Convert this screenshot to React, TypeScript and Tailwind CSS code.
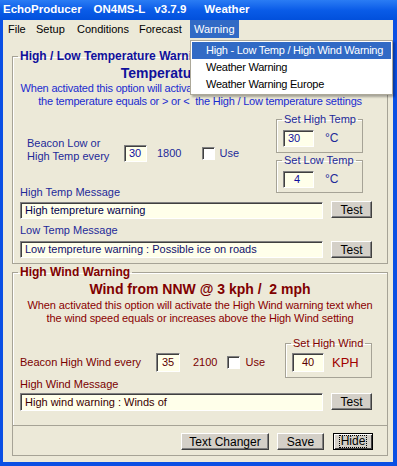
import type { ReactNode } from "react"

function TextBox({ value, className = "" }: { value: string; className?: string }) {
  return (
    <div
      className={`flex items-center bg-[#FFFFEA] border border-t-[#808080] border-l-[#808080] border-b-white border-r-white shadow-[inset_1px_1px_0_#404040] pl-[4px] text-[11px] leading-none whitespace-nowrap overflow-hidden ${className}`}
    >
      {value}
    </div>
  )
}

function Btn({ label, className = "" }: { label: string; className?: string }) {
  return (
    <div
      className={`flex items-center justify-center bg-[#D4D0C8] border border-t-white border-l-white border-b-[#404040] border-r-[#404040] shadow-[inset_-1px_-1px_0_#808080] text-[12px] text-black ${className}`}
    >
      {label}
    </div>
  )
}

function Check() {
  return (
    <div className="w-[13px] h-[13px] bg-white border border-t-[#808080] border-l-[#808080] border-b-white border-r-white shadow-[inset_1px_1px_0_#404040]" />
  )
}

function Group({
  title,
  legendClass,
  className = "",
  children,
}: {
  title: string
  legendClass: string
  className?: string
  children: ReactNode
}) {
  return (
    <fieldset className={`border border-[#A6A396] shadow-[inset_1px_1px_0_#fff] ${className}`}>
      <legend className={`ml-[5px] px-[2px] ${legendClass}`}>{title}</legend>
      {children}
    </fieldset>
  )
}

export default function App() {
  return (
    <div className="w-[397px] h-[466px] bg-[#0A4FE4] flex flex-col font-['Liberation_Sans',Arial,sans-serif] select-none">
      {/* title bar */}
      <div className="h-[20px] flex items-center px-[3px] bg-gradient-to-b from-[#2A7CF4] via-[#0A5CE8] to-[#0250DC] text-white font-bold text-[11.5px] whitespace-pre">
        <span>EchoProducer</span>
        <span className="ml-[12px]">ON4MS-L</span>
        <span className="ml-[9px]">v3.7.9</span>
        <span className="ml-[18px]">Weather</span>
      </div>

      {/* window body */}
      <div className="relative flex-1 ml-[3px] mr-[4px] mb-[4px] bg-[#ECE9D8] flex flex-col text-[11px]">
        {/* menu bar */}
        <div className="h-[18px] flex items-center text-black">
          <div className="w-[28px] pl-[5px]">File</div>
          <div className="w-[41px] pl-[5px]">Setup</div>
          <div className="w-[62px] pl-[5px]">Conditions</div>
          <div className="w-[56px] pl-[5px]">Forecast</div>
          <div className="w-[49px] h-[18px] pl-[4px] flex items-center bg-[#316AC5] text-white">Warning</div>
        </div>

        <div className="flex flex-col pt-[11px] pl-[9px] pr-[5px]">
          {/* High / Low temperature group */}
          <Group
            title="High / Low Temperature Warning"
            legendClass="text-[12px] leading-[14px] font-bold text-[#10109C]"
            className="h-[215px] flex flex-col"
          >
            <div className="mt-[2px] text-center text-[14px] leading-[16px] font-bold text-[#10109C]">
              Temperature now 6.8 °C
            </div>
            <div className="mt-[1px] text-center leading-[13px] tracking-[-0.2px] text-[#1A2BD0] whitespace-pre">
              <div>When activated this option will activate the Low / High temperature text when</div>
              <div>the temperature equals or &gt; or &lt;  the High / Low temperature settings</div>
            </div>

            <div className="mt-[5px] flex items-start">
              <div className="flex flex-col">
                <div className="mt-[24px] ml-[14px] flex items-end text-[#1E2A98]">
                  <div className="w-[97px] leading-[13px]">
                    <div>Beacon Low or</div>
                    <div>High Temp every</div>
                  </div>
                  <div className="mb-[1px] h-[17px] flex items-center">
                    <TextBox value="30" className="w-[23px] h-[17px] text-[#10109C]" />
                    <span className="ml-[10px]">1800</span>
                    <div className="ml-[21px]">
                      <Check />
                    </div>
                    <span className="ml-[4px]">Use</span>
                  </div>
                </div>
                <div className="mt-[23px] ml-[7px] leading-[12px] text-[#1E2A98]">High Temp Message</div>
              </div>

              <div className="ml-auto mr-[24px] w-[87px] flex flex-col">
                <Group
                  title="Set High Temp"
                  legendClass="text-[11px] leading-[13px] text-[#1E2A98]"
                  className="h-[40px]"
                >
                  <div className="mt-[3px] ml-[6px] flex items-center">
                    <TextBox value="30" className="w-[31px] h-[17px] text-[#10109C]" />
                    <span className="ml-[11px] text-[12px] text-[#1E2A98]">°C</span>
                  </div>
                </Group>
                <Group
                  title="Set Low Temp"
                  legendClass="text-[11px] leading-[13px] text-[#1E2A98]"
                  className="mt-[1px] h-[39px]"
                >
                  <div className="mt-[3px] ml-[6px] flex items-center">
                    <TextBox value="4" className="w-[31px] h-[17px] pl-[10px] text-[#10109C]" />
                    <span className="ml-[11px] text-[12px] text-[#1E2A98]">°C</span>
                  </div>
                </Group>
              </div>
            </div>

            <div className="mt-[4px] flex items-start">
              <TextBox value="High tempreture warning" className="ml-[7px] w-[303px] h-[17px] text-[#00004A]" />
              <Btn label="Test" className="ml-[8px] -mt-[1px] w-[41px] h-[17px]" />
            </div>
            <div className="mt-[5px] ml-[7px] leading-[12px] text-[#1E2A98]">Low Temp Message</div>
            <div className="mt-[5px] flex items-start">
              <TextBox
                value="Low tempreture warning : Possible ice on roads"
                className="ml-[7px] w-[303px] h-[17px] text-[#10106A]"
              />
              <Btn label="Test" className="ml-[8px] w-[41px] h-[17px]" />
            </div>
          </Group>

          {/* High wind group */}
          <Group
            title="High Wind Warning"
            legendClass="text-[12px] leading-[14px] font-bold text-[#800000]"
            className="mt-[1px] h-[161px] flex flex-col"
          >
            <div className="mt-[2px] text-center text-[14px] leading-[16px] font-bold text-[#800000] whitespace-pre">
              Wind from NNW @ 3 kph /  2 mph
            </div>
            <div className="mt-[2px] text-center leading-[13px] tracking-[-0.1px] text-[#8A0000]">
              <div>When activated this option will activate the High Wind warning text when</div>
              <div>the wind speed equals or increases above the High Wind setting</div>
            </div>

            <div className="mt-[12px] flex items-start">
              <div className="mt-[16px] h-[19px] flex items-center text-[#7A0000]">
                <div className="ml-[7px] w-[136px]">Beacon High Wind every</div>
                <TextBox value="35" className="w-[24px] h-[19px] pl-[5px] text-[#5A0000]" />
                <span className="ml-[13px]">2100</span>
                <div className="ml-[10px]">
                  <Check />
                </div>
                <span className="ml-[5px]">Use</span>
              </div>
              <Group
                title="Set High Wind"
                legendClass="text-[11px] leading-[13px] text-[#800000]"
                className="ml-auto mr-[15px] w-[87px] h-[41px]"
              >
                <div className="mt-[3px] ml-[6px] flex items-center">
                  <TextBox value="40" className="w-[32px] h-[19px] pl-[9px] text-[#5A0000]" />
                  <span className="ml-[8px] text-[13px] text-[#A00000]">KPH</span>
                </div>
              </Group>
            </div>

            <div className="ml-[7px] leading-[12px] text-[#7A0000]">High Wind Message</div>
            <div className="mt-[3px] flex items-start">
              <TextBox value="High wind warning : Winds of" className="ml-[7px] w-[303px] h-[18px] text-[#3A0000]" />
              <Btn label="Test" className="ml-[8px] w-[41px] h-[17px]" />
            </div>
          </Group>

          {/* bottom button panel */}
          <div className="h-[30px] border-x border-b border-[#A6A396] flex justify-end items-start pt-[7px] pr-[14px]">
            <Btn label="Text Changer" className="w-[88px] h-[17px]" />
            <Btn label="Save" className="ml-[8px] w-[47px] h-[17px]" />
            <div className="ml-[9px] w-[40px] h-[17px] border border-black bg-[#D4D0C8] flex items-center justify-center shadow-[inset_1px_1px_0_#fff,inset_-1px_-1px_0_#404040]">
              <span className="border border-dotted border-black px-[1px] leading-[11px] text-[12px] text-black">Hide</span>
            </div>
          </div>
        </div>

        {/* open Warning menu */}
        <div className="absolute left-[187px] top-[20px] w-[203px] bg-white border border-[#ACA899] p-[1px] shadow-[2px_2px_2px_rgba(0,0,0,0.3)] text-black whitespace-nowrap tracking-[-0.25px]">
          <div className="h-[17px] flex items-center pl-[14px] bg-[#316AC5] text-white">
            High - Low Temp / High Wind Warning
          </div>
          <div className="h-[17px] flex items-center pl-[14px]">Weather Warning</div>
          <div className="h-[17px] flex items-center pl-[14px]">Weather Warning Europe</div>
        </div>
      </div>
    </div>
  )
}
